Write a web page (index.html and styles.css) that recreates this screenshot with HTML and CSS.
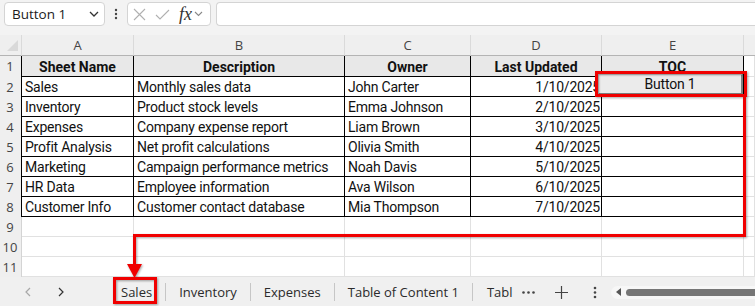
FILE: index.html
```html
<!DOCTYPE html>
<html lang="en">
<head>
  <meta charset="UTF-8">
  <title>Table of Contents - Sheet</title>
  <link rel="stylesheet" href="styles.css">
</head>
<body>
  <div class="window">
    <!-- Formula bar -->
    <div class="formula-bar">
      <div class="name-box">
        <span>Button 1</span>
        <svg width="10" height="6" viewBox="0 0 10 6"><path d="M1 1 L5 5 L9 1" fill="none" stroke="#333" stroke-width="1.3"/></svg>
      </div>
      <div class="vdots">
        <svg width="4" height="12" viewBox="0 0 4 12"><circle cx="2" cy="2" r="1.2" fill="#444"/><circle cx="2" cy="6" r="1.2" fill="#444"/><circle cx="2" cy="10" r="1.2" fill="#444"/></svg>
      </div>
      <div class="fx-box">
        <svg width="13" height="13" viewBox="0 0 13 13"><path d="M1 1 L12 12 M12 1 L1 12" stroke="#b0b0b0" stroke-width="1.1"/></svg>
        <svg width="15" height="11" viewBox="0 0 15 11"><path d="M1 6 L5 10 L14 1" fill="none" stroke="#b0b0b0" stroke-width="1.1"/></svg>
        <span class="fx">fx</span>
        <svg width="9" height="6" viewBox="0 0 9 6"><path d="M1 1 L4.5 4.5 L8 1" fill="none" stroke="#888" stroke-width="1.1"/></svg>
      </div>
      <div class="formula-input"></div>
    </div>

    <!-- Sheet grid -->
    <div class="sheet">
      <div class="corner"></div>
      <div class="col-head">A</div>
      <div class="col-head">B</div>
      <div class="col-head">C</div>
      <div class="col-head">D</div>
      <div class="col-head">E</div>
      <div class="col-head last"></div>

      <div class="row-head in-table">1</div>
      <div class="cell t head">Sheet Name</div>
      <div class="cell t head">Description</div>
      <div class="cell t head">Owner</div>
      <div class="cell t head">Last Updated</div>
      <div class="cell t head">TOC</div>
      <div class="cell"></div>

      <div class="row-head in-table">2</div>
      <div class="cell t">Sales</div>
      <div class="cell t">Monthly sales data</div>
      <div class="cell t">John Carter</div>
      <div class="cell t num">1/10/2025</div>
      <div class="cell t"></div>
      <div class="cell"></div>

      <div class="row-head in-table">3</div>
      <div class="cell t">Inventory</div>
      <div class="cell t">Product stock levels</div>
      <div class="cell t">Emma Johnson</div>
      <div class="cell t num">2/10/2025</div>
      <div class="cell t"></div>
      <div class="cell"></div>

      <div class="row-head in-table">4</div>
      <div class="cell t">Expenses</div>
      <div class="cell t">Company expense report</div>
      <div class="cell t">Liam Brown</div>
      <div class="cell t num">3/10/2025</div>
      <div class="cell t"></div>
      <div class="cell"></div>

      <div class="row-head in-table">5</div>
      <div class="cell t">Profit Analysis</div>
      <div class="cell t">Net profit calculations</div>
      <div class="cell t">Olivia Smith</div>
      <div class="cell t num">4/10/2025</div>
      <div class="cell t"></div>
      <div class="cell"></div>

      <div class="row-head in-table">6</div>
      <div class="cell t">Marketing</div>
      <div class="cell t">Campaign performance metrics</div>
      <div class="cell t">Noah Davis</div>
      <div class="cell t num">5/10/2025</div>
      <div class="cell t"></div>
      <div class="cell"></div>

      <div class="row-head in-table">7</div>
      <div class="cell t">HR Data</div>
      <div class="cell t">Employee information</div>
      <div class="cell t">Ava Wilson</div>
      <div class="cell t num">6/10/2025</div>
      <div class="cell t"></div>
      <div class="cell"></div>

      <div class="row-head in-table">8</div>
      <div class="cell t">Customer Info</div>
      <div class="cell t">Customer contact database</div>
      <div class="cell t">Mia Thompson</div>
      <div class="cell t num">7/10/2025</div>
      <div class="cell t"></div>
      <div class="cell"></div>

      <div class="row-head">9</div>
      <div class="cell"></div><div class="cell"></div><div class="cell"></div>
      <div class="cell"></div><div class="cell"></div><div class="cell"></div>

      <div class="row-head">10</div>
      <div class="cell"></div><div class="cell"></div><div class="cell"></div>
      <div class="cell"></div><div class="cell"></div><div class="cell"></div>

      <div class="row-head">11</div>
      <div class="cell"></div><div class="cell"></div><div class="cell"></div>
      <div class="cell"></div><div class="cell"></div><div class="cell"></div>

      <!-- floating form control over E2 -->
      <div class="form-button">Button 1</div>
    </div>

    <!-- Sheet tabs -->
    <div class="tab-bar">
      <div class="nav-btn">
        <svg width="6" height="10" viewBox="0 0 6 10"><path d="M5 1 L1 5 L5 9" fill="none" stroke="#a8a8a8" stroke-width="1.2"/></svg>
      </div>
      <div class="nav-btn">
        <svg width="6" height="10" viewBox="0 0 6 10"><path d="M1 1 L5 5 L1 9" fill="none" stroke="#333" stroke-width="1.2"/></svg>
      </div>
      <div class="tabs">
        <div class="tab">Sales</div>
        <div class="tab">Inventory</div>
        <div class="tab">Expenses</div>
        <div class="tab">Table of Content 1</div>
        <div class="tab partial">Tabl</div>
      </div>
      <div class="more">
        <svg width="13" height="3" viewBox="0 0 13 3"><circle cx="1.5" cy="1.5" r="1.3" fill="#444"/><circle cx="6.5" cy="1.5" r="1.3" fill="#444"/><circle cx="11.5" cy="1.5" r="1.3" fill="#444"/></svg>
      </div>
      <div class="add">
        <svg width="13" height="13" viewBox="0 0 13 13"><path d="M6.5 0 V13 M0 6.5 H13" stroke="#444" stroke-width="1.2"/></svg>
      </div>
      <div class="vmenu">
        <svg width="4" height="13" viewBox="0 0 4 13"><circle cx="2" cy="2" r="1.3" fill="#444"/><circle cx="2" cy="6.5" r="1.3" fill="#444"/><circle cx="2" cy="11" r="1.3" fill="#444"/></svg>
      </div>
      <div class="hscroll">
        <svg width="5" height="8" viewBox="0 0 5 8"><path d="M5 0 V8 L0 4 Z" fill="#555"/></svg>
        <div class="thumb"></div>
      </div>
    </div>

    <!-- red annotation overlay -->
    <svg class="annotate" width="755" height="306" viewBox="0 0 755 306">
      <g fill="none" stroke="#f00000" stroke-width="3">
        <rect x="596.5" y="72.5" width="149" height="23"/>
        <polyline points="744.5,96 744.5,235.5 134.5,235.5 134.5,266"/>
        <rect x="114.5" y="278.5" width="41" height="24"/>
      </g>
      <polygon points="127,264 142,264 134.5,278" fill="#f00000"/>
    </svg>
  </div>
</body>
</html>
```

FILE: styles.css
```css
/* Page */
body {
  margin: 0;
  background: #f0f0f0;
  font-family: "Open Sans", "Noto Sans", sans-serif;
  color: #222;
}
.window {
  position: relative;
  width: 755px;
  height: 306px;
  overflow: hidden;
}

/* Formula bar */
.formula-bar {
  display: flex;
  align-items: center;
  height: 35px;
  padding: 0 0 7px 4px;
  box-sizing: border-box;
  background: #f3f3f3;
}
.name-box, .fx-box, .formula-input {
  height: 24px;
  box-sizing: border-box;
  background: #fff;
  border: 1px solid #d4d4d4;
  border-radius: 4px;
}
.name-box {
  width: 101px;
  display: flex;
  align-items: center;
  justify-content: space-between;
  padding: 0 5px 0 7px;
  font-size: 13.5px;
  color: #1b1b1b;
}
.vdots {
  width: 22px;
  display: flex;
  justify-content: center;
}
.fx-box {
  width: 84px;
  display: flex;
  align-items: center;
  padding: 0 3px 0 5px;
  gap: 9px;
}
.fx-box .fx {
  font-family: "Liberation Serif", serif;
  font-style: italic;
  font-size: 18px;
  line-height: 18px;
  color: #333;
  margin-right: -7px;
}
.formula-input {
  flex: 1;
  margin-left: 5px;
  border-right: none;
  border-radius: 4px 0 0 4px;
}

/* Sheet grid */
.sheet {
  position: relative;
  display: grid;
  grid-template-columns: 22px 112px 211px 126px 131px 142px 1fr;
  grid-template-rows: 21px 21px repeat(10, 20px);
  background: #fff;
  font-family: Roboto, "Liberation Sans", sans-serif;
  font-size: 14px;
}
.corner {
  background: #efefef;
  border-right: 1px solid #dadada;
  border-bottom: 1px solid #b4b4b4;
  position: relative;
}
.corner::after {
  content: "";
  position: absolute;
  left: 7px;
  bottom: 4px;
  border-left: 11px solid transparent;
  border-bottom: 11px solid #d9d9d9;
}
.col-head {
  background: #efefef;
  border-right: 1px solid #dadada;
  border-bottom: 1px solid #b4b4b4;
  font-family: "Open Sans", sans-serif;
  font-size: 13px;
  color: #444;
  text-align: center;
  line-height: 20px;
}
.col-head.last {
  border-right: none;
}
.row-head {
  background: #efefef;
  border-right: 1px solid #d4d4d4;
  font-family: "Open Sans", sans-serif;
  font-size: 13px;
  color: #444;
  text-align: center;
  line-height: 21px;
  padding-right: 1px;
}
.row-head.in-table {
  border-right-color: #000;
}
.cell {
  box-sizing: border-box;
  border-right: 1px solid #e1e1e1;
  border-bottom: 1px solid #e1e1e1;
  padding: 0 3px;
  line-height: 21px;
  white-space: nowrap;
  overflow: hidden;
  letter-spacing: -0.22px;
  color: #111;
}
.cell.t {
  border-color: #000;
}
.cell.head {
  background: #e8e8e8;
  font-weight: bold;
  text-align: center;
  letter-spacing: 0;
  line-height: 23px;
}
.cell.num {
  text-align: right;
  padding-right: 1px;
}

/* Form control button floating over E2 */
.form-button {
  position: absolute;
  left: 598px;
  top: 39px;
  width: 145px;
  height: 21px;
  box-sizing: border-box;
  background: #ebebeb;
  border: 1px solid #cfcfcf;
  border-right: 2px solid #808080;
  border-bottom: 2px solid #808080;
  text-align: center;
  line-height: 19px;
  font-size: 14px;
  letter-spacing: -0.2px;
  color: #111;
}

/* Sheet tabs */
.tab-bar {
  display: flex;
  align-items: center;
  height: 30px;
  padding-left: 11px;
  background: #f0f0f0;
  font-size: 13px;
  color: #2b2b2b;
}
.nav-btn {
  width: 33px;
  display: flex;
  justify-content: center;
}
.tabs {
  display: flex;
  align-items: center;
  margin-left: 31px;
}
.tab {
  height: 18px;
  line-height: 18px;
  padding: 0 13px;
  border-right: 1px solid #c6c6c6;
  white-space: nowrap;
}
.tab.partial {
  padding-left: 14px;
  padding-right: 0;
  border-right: none;
}
.more {
  margin-left: 9px;
  display: flex;
}
.add {
  margin-left: 20px;
  display: flex;
}
.vmenu {
  margin-left: 25px;
  display: flex;
}
.hscroll {
  flex: 1;
  margin-left: 14px;
  height: 13px;
  display: flex;
  align-items: center;
  padding-left: 5px;
  gap: 5px;
  background: #f7f7f7;
  border-radius: 7px 0 0 7px;
}
.thumb {
  flex: 1;
  height: 7px;
  background: #767676;
  border-radius: 4px 0 0 4px;
}

/* Annotation overlay */
.annotate {
  position: absolute;
  left: 0;
  top: 0;
  pointer-events: none;
  filter: drop-shadow(1px 1px 1px rgba(0, 0, 0, 0.35));
}
```
